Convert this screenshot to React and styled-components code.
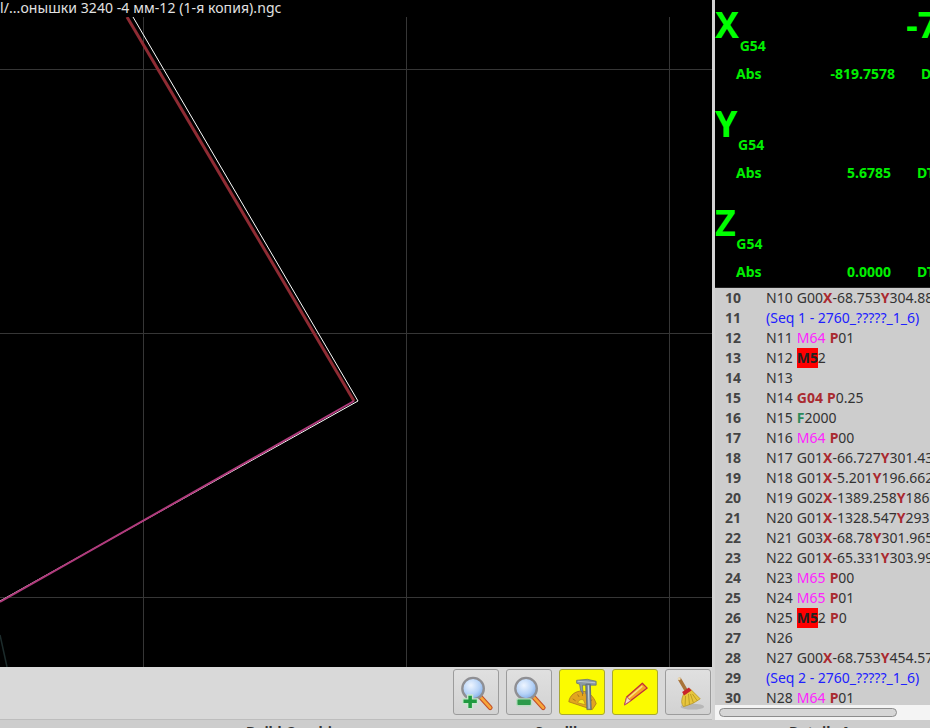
import React from "react";
import styled, { createGlobalStyle } from "styled-components";

const GlobalStyle = createGlobalStyle`
  html, body {
    margin: 0;
    padding: 0;
    background: #cdcdcd;
    overflow: hidden;
  }
  * {
    box-sizing: border-box;
  }
`;

const axes = [
  { name: "X", big: "-739.7578", abs: "-819.7578", dist: "DTG", valueWidth: 129 },
  { name: "Y", big: "5.6785", abs: "5.6785", dist: "DTG", valueWidth: 125 },
  { name: "Z", big: "0.0000", abs: "0.0000", dist: "DTG", valueWidth: 125 },
];

const lines = [
  "N10 G00X-68.753Y304.889",
  "(Seq 1 - 2760_?????_1_6)",
  "N11 M64 P01",
  "N12 M52",
  "N13",
  "N14 G04 P0.25",
  "N15 F2000",
  "N16 M64 P00",
  "N17 G01X-66.727Y301.439",
  "N18 G01X-5.201Y196.662",
  "N19 G02X-1389.258Y186.42",
  "N20 G01X-1328.547Y293.11",
  "N21 G03X-68.78Y301.965",
  "N22 G01X-65.331Y303.994",
  "N23 M65 P00",
  "N24 M65 P01",
  "N25 M52 P0",
  "N26",
  "N27 G00X-68.753Y454.571",
  "(Seq 2 - 2760_?????_1_6)",
  "N28 M64 P01",
];

function renderCode(line) {
  if (line.startsWith("(")) return <Comment>{line}</Comment>;
  const parts = line.split(/(M5(?=2)|M6[45]|G04|[XYP]|F(?=\d))/);
  return parts.map((part, i) => {
    if (part === "M5") return <Spindle key={i}>{part}</Spindle>;
    if (part === "M64" || part === "M65") return <MCode key={i}>{part}</MCode>;
    if (part === "F") return <Feed key={i}>{part}</Feed>;
    if (part === "G04" || part === "X" || part === "Y" || part === "P")
      return <Word key={i}>{part}</Word>;
    return part;
  });
}

function ZoomIcon({ plus }) {
  const id = plus ? "lensA" : "lensB";
  return (
    <svg width="45" height="45" viewBox="0 0 45 45">
      <defs>
        <radialGradient id={id} cx="0.4" cy="0.35" r="0.75">
          <stop offset="0" stopColor="#eef5ff" />
          <stop offset="0.55" stopColor="#b5d2f7" />
          <stop offset="1" stopColor="#6d9de0" />
        </radialGradient>
      </defs>
      <path d="M27 27 L37 38" stroke="#c4502a" strokeWidth="5" strokeLinecap="round" />
      <path d="M27.5 27.5 L37 38" stroke="#f7a63a" strokeWidth="2.8" strokeLinecap="round" />
      <circle cx="19.5" cy="18.5" r="11" fill={`url(#${id})`} stroke="#8f8f93" strokeWidth="2.4" />
      {plus ? (
        <path
          d="M14 25h5v4h5v5h-5v5h-5v-5H9v-5h5z"
          fill="#1f9a3f"
          stroke="#c7e6cd"
          strokeWidth="1.4"
        />
      ) : (
        <rect x="10" y="29" width="15" height="7" rx="1.5" fill="#2c9a4a" stroke="#b9dcc0" strokeWidth="1.4" />
      )}
    </svg>
  );
}

function CaliperIcon() {
  return (
    <svg width="45" height="45" viewBox="0 0 45 45">
      <path d="M9 32 C10 25 16 21 22 21 C29 21 35 27 37 34 L33 40 Z" fill="#e2a51f" stroke="#a8761a" strokeWidth="0.8" />
      <path d="M18 33 C19 30 22 29 24 30 L26 35 Z" fill="#f8ec20" stroke="#b58a1a" strokeWidth="0.7" />
      <path d="M13 29 L16 31 M18 24.5 L19.5 27 M23 23 L23 26 M33 30 L30 31.5" stroke="#9c6c14" strokeWidth="0.8" />
      <path d="M17 10 L28 9 L37 11 L37 15 L31 15 L31 24 L26.5 24 L26.5 15 L23 15 L23.5 24 L21 20 L20 14 L17 13 Z" fill="#8b99a4" stroke="#5e6b75" strokeWidth="0.7" />
      <path d="M26.5 14 L31 14 L32 40 L27.5 40 Z" fill="#7b8a96" stroke="#56626c" strokeWidth="0.7" />
      <path d="M29 15 L29.8 39" stroke="#c8d2d9" strokeWidth="1.2" />
      <path d="M18 11 L36 12.5" stroke="#bcc7cf" strokeWidth="1" />
    </svg>
  );
}

function PencilIcon() {
  return (
    <svg width="45" height="45" viewBox="0 0 45 45">
      <path d="M30 13 L35 18 L18 31 L12 35 L14 27 Z" fill="#f5a623" stroke="#c22d3a" strokeWidth="1.3" strokeLinejoin="round" />
      <path d="M14 27 L12 35 L18 31 Z" fill="#f8dcc0" stroke="#b05a70" strokeWidth="0.8" />
      <path d="M30 16 L16 28" stroke="#fbe07a" strokeWidth="1.4" />
    </svg>
  );
}

function BroomIcon() {
  return (
    <svg width="45" height="45" viewBox="0 0 45 45">
      <ellipse cx="27" cy="37" rx="12" ry="3" fill="#a8a8a8" opacity="0.65" />
      <path d="M14 9 L21 21" stroke="#a9743a" strokeWidth="3.6" strokeLinecap="round" />
      <circle cx="13.5" cy="8.5" r="1.5" fill="#e9d8b4" />
      <path d="M18 24 L25 19 L35 29 Q29 34 18 37 Q14 33 18 24 Z" fill="#e8c63e" stroke="#b2901c" strokeWidth="0.7" />
      <path d="M20 26 L19.5 36 M23 24 L24 35 M25 24 L28 33 M27 24 L32 31" stroke="#b0921e" strokeWidth="0.8" />
      <path d="M16.5 22 L23.5 17.5 L26 20.5 L18.5 25.5 Z" fill="#c8242c" />
    </svg>
  );
}

export default function App() {
  return (
    <Page>
      <GlobalStyle />
      <Main>
        <LeftColumn>
          <Graphics>
            <PathTitle>l/...онышки 3240 -4 мм-12 (1-я копия).ngc</PathTitle>
            <Plot viewBox="0 17 712 650" width="712" height="650">
              <g stroke="#363636" strokeWidth="1">
                <path d="M143.5 0V667M406.5 0V667M669.5 0V667" />
                <path d="M0 69.5H712M0 333.5H712M0 597.5H712" />
              </g>
              <path d="M0 635 L7 667" stroke="#1c2b2b" strokeWidth="1.5" fill="none" />
              <path d="M133 17 L358 401 L0 601" stroke="#fff" strokeWidth="1" fill="none" />
              <path d="M127 17 L354 401" stroke="#8e2b33" strokeWidth="3" fill="none" />
              <path d="M354 401 L0 602" stroke="#b03a7c" strokeWidth="2" fill="none" />
            </Plot>
          </Graphics>
          <Toolbar>
            <ToolButton>
              <ZoomIcon plus />
            </ToolButton>
            <ToolButton>
              <ZoomIcon />
            </ToolButton>
            <ToolButton $active>
              <CaliperIcon />
            </ToolButton>
            <ToolButton $active>
              <PencilIcon />
            </ToolButton>
            <ToolButton>
              <BroomIcon />
            </ToolButton>
          </Toolbar>
        </LeftColumn>
        <Splitter />
        <RightColumn>
          <Dro>
            {axes.map((axis) => (
              <AxisBlock key={axis.name}>
                <AxisTop>
                  <AxisLetter>{axis.name}</AxisLetter>
                  <WorkSystem>G54</WorkSystem>
                  <BigValue>{axis.big}</BigValue>
                </AxisTop>
                <AbsRow $valueWidth={axis.valueWidth}>
                  <AbsLabel>Abs</AbsLabel>
                  <AbsValue>{axis.abs}</AbsValue>
                  <DistLabel>{axis.dist}</DistLabel>
                </AbsRow>
              </AxisBlock>
            ))}
          </Dro>
          <CodeList>
            {lines.map((line, i) => (
              <CodeRow key={i}>
                <LineNumber>{i + 10}</LineNumber>
                <CodeText>{renderCode(line)}</CodeText>
              </CodeRow>
            ))}
          </CodeList>
          <ScrollTrack>
            <ScrollThumb />
          </ScrollTrack>
        </RightColumn>
      </Main>
      <TabStrip>
        <TabLabel $width="289px">Build Graphics</TabLabel>
        <TabLabel $width="254px">Scrollbar</TabLabel>
        <TabLabel>Details Area</TabLabel>
      </TabStrip>
    </Page>
  );
}

const Page = styled.div`
  width: 930px;
  height: 728px;
  overflow: hidden;
  display: flex;
  flex-direction: column;
  background: #cdcdcd;
  font-family: "Noto Sans", sans-serif;
`;

const Main = styled.div`
  display: flex;
  height: 720px;
  flex: none;
`;

const LeftColumn = styled.div`
  width: 712px;
  display: flex;
  flex-direction: column;
`;

const Graphics = styled.div`
  height: 667px;
  background: #000;
  overflow: hidden;
`;

const Plot = styled.svg`
  display: block;
`;

const PathTitle = styled.div`
  height: 17px;
  margin-top: -2px;
  margin-bottom: 2px;
  font-size: 14px;
  line-height: 19px;
  letter-spacing: 0.07px;
  color: #e2e2e2;
  white-space: nowrap;
`;

const Toolbar = styled.div`
  flex: 1;
  display: flex;
  justify-content: flex-end;
  align-items: flex-start;
  gap: 7px;
  padding: 2px 1px 0 0;
  background: #d9d9d9;
  border-bottom: 1px solid #bdbdbd;
`;

const ToolButton = styled.button`
  width: 46px;
  height: 46px;
  padding: 0;
  display: flex;
  align-items: center;
  justify-content: center;
  border: 1px solid ${(props) => (props.$active ? "#a8a832" : "#9c9c9c")};
  border-radius: 3px;
  background: ${(props) =>
    props.$active ? "#fbfb00" : "linear-gradient(#e0e0e0, #d2d2d2)"};
`;

const Splitter = styled.div`
  width: 3px;
  background: #d4d4d4;
`;

const RightColumn = styled.div`
  width: 215px;
  display: flex;
  flex-direction: column;
  overflow: hidden;
`;

const Dro = styled.div`
  height: 288px;
  flex: none;
  background: #000;
  color: #00f000;
  overflow: hidden;
  border-bottom: 1px solid #222;
`;

const AxisBlock = styled.div`
  width: 380px;
  height: 99px;
`;

const AxisTop = styled.div`
  display: flex;
  width: 357px;
  height: 64px;
  padding-top: 3px;
`;

const AxisLetter = styled.span`
  font-size: 36px;
  font-weight: 700;
  line-height: 44px;
  color: #00ff00;
`;

const WorkSystem = styled.span`
  margin: 33px 0 0 0.5px;
  font-size: 14px;
  font-weight: 700;
  line-height: 19px;
`;

const BigValue = styled.span`
  margin-left: auto;
  font-size: 36px;
  font-weight: 700;
  line-height: 44px;
  color: #00ff00;
  white-space: nowrap;
`;

const AbsRow = styled.div`
  display: grid;
  grid-template-columns: 21px 30px ${(props) => props.$valueWidth}px 26px auto;
  font-size: 14px;
  font-weight: 700;
  line-height: 19px;
`;

const AbsLabel = styled.span`
  grid-column: 2;
`;

const AbsValue = styled.span`
  grid-column: 3;
  text-align: right;
`;

const DistLabel = styled.span`
  grid-column: 5;
`;

const CodeList = styled.div`
  flex: 1;
  min-height: 0;
  overflow: hidden;
  background: #cdcdcd;
`;

const CodeRow = styled.div`
  display: flex;
  height: 20px;
  align-items: center;
  font-size: 14px;
  line-height: 20px;
  white-space: nowrap;
`;

const LineNumber = styled.span`
  width: 26px;
  flex: none;
  text-align: right;
  font-weight: 700;
  color: #444;
`;

const CodeText = styled.span`
  margin-left: 25px;
  color: #333;
  word-spacing: 0.5px;
`;

const Word = styled.span`
  font-weight: 700;
  color: #aa2a30;
`;

const MCode = styled.span`
  color: #ff22ff;
`;

const Feed = styled.span`
  font-weight: 700;
  color: #2a8a5a;
`;

const Comment = styled.span`
  color: #2020ff;
  word-spacing: 0;
`;

const Spindle = styled.span`
  display: inline-block;
  width: 21px;
  line-height: 20px;
  font-weight: 700;
  color: #222;
  background: #ff0000;
`;

const ScrollTrack = styled.div`
  height: 15px;
  flex: none;
  padding: 3px 33px 3px 4px;
  background: #f4f4f4;
`;

const ScrollThumb = styled.div`
  height: 9px;
  border: 1px solid #8c8c8c;
  border-radius: 5px;
  background: #d6d6d6;
`;

const TabStrip = styled.div`
  display: flex;
  height: 8px;
  padding-left: 246px;
  background: #cdcdcd;
  font-size: 14px;
  font-weight: 700;
  line-height: 19px;
  color: #333;
  white-space: nowrap;
`;

const TabLabel = styled.span`
  width: ${(props) => props.$width || "auto"};
  margin-top: 2px;
`;
